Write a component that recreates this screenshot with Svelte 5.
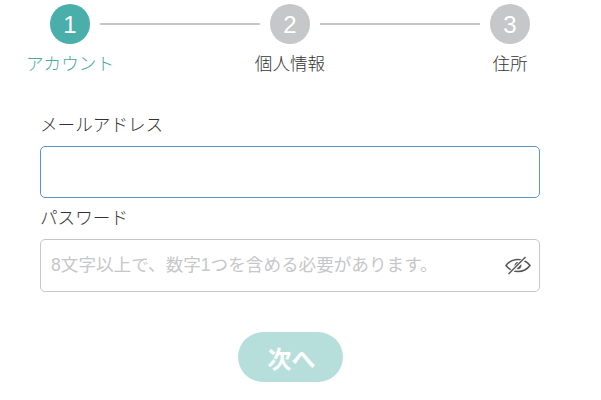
<script>
  const steps = [
    { n: 1, label: 'アカウント', active: true },
    { n: 2, label: '個人情報', active: false },
    { n: 3, label: '住所', active: false }
  ];
</script>

<main class="page">
  <ol class="stepper">
    {#each steps as s, i}
      {#if i > 0}<li class="line" aria-hidden="true"></li>{/if}
      <li class="step" class:active={s.active}>
        <span class="circle">{s.n}</span>
        <span class="label">{s.label}</span>
      </li>
    {/each}
  </ol>

  <form class="form" onsubmit={(e) => e.preventDefault()}>
    <label class="field">
      <span class="name">メールアドレス</span>
      <input class="input focus" type="email" />
    </label>
    <label class="field second">
      <span class="name">パスワード</span>
      <span class="wrap">
        <input class="input pw" type="password" placeholder="8文字以上で、数字1つを含める必要があります。" />
        <svg class="eye" viewBox="0 0 26 20" width="26" height="20" aria-hidden="true">
          <path d="M1 10.500C4 6.500 8.300 4.500 13 4.500s9 2 12 6C22 14.500 17.700 16.500 13 16.500S4 14.500 1 10.500Z" fill="none" stroke="#555" stroke-width="1.500"/>
          <path d="M13 7a3.500 3.500 0 0 1 3.300 4.600 3.500 3.500 0 0 1-4.300 2.400L9.600 11A3.500 3.500 0 0 1 13 7Z" fill="#555"/>
          <path d="M4 19 21 2" stroke="#fff" stroke-width="3.500"/>
          <path d="M3.500 19 20.500 2" stroke="#555" stroke-width="1.400"/>
        </svg>
      </span>
    </label>
    <div class="actions">
      <button class="next" type="button">次へ</button>
    </div>
  </form>
</main>

<style>
  :global(body) {
    margin: 0;
    background: #fff;
  }
  .page {
    width: 500px;
    padding: 4px 0 0 40px;
    font-family: "Liberation Sans", "Noto Sans CJK JP", sans-serif;
    color: #444;
  }
  .stepper {
    display: flex;
    list-style: none;
    margin: 0;
    padding: 0;
  }
  .step {
    width: 60px;
    flex: none;
    display: flex;
    flex-direction: column;
    align-items: center;
    white-space: nowrap;
  }
  .circle {
    width: 40px;
    height: 40px;
    border-radius: 50%;
    background: #c6c7c9;
    color: #fff;
    font-size: 24px;
    line-height: 42px;
    text-align: center;
  }
  .active .circle {
    background: #4aafaa;
  }
  .label {
    margin-top: 5px;
    font-size: 17.6px;
    line-height: 30px;
    font-weight: 300;
    color: #333;
  }
  .active .label {
    color: #45aaa5;
  }
  .line {
    flex: 1;
    height: 2px;
    margin-top: 19px;
    background: #c6c7c9;
  }
  .form {
    margin-top: 31px;
  }
  .field {
    display: block;
  }
  .name {
    display: block;
    font-size: 17.6px;
    line-height: 30px;
    font-weight: 300;
    margin-bottom: 6px;
    color: #333;
  }
  .second .name {
    margin-bottom: 6px;
    margin-top: 5px;
  }
  .wrap {
    display: block;
    position: relative;
  }
  .input {
    display: block;
    box-sizing: border-box;
    width: 100%;
    height: 52px;
    border: 1px solid #c6c7c9;
    border-radius: 5px;
    background: #fff;
    padding: 0 40px 0 10px;
    margin: 0;
    outline: none;
    font-family: inherit;
    font-size: 17.6px;
  }
  .focus {
    border-color: #5b93cc;
  }
  .pw {
    height: 53px;
  }
  .pw::placeholder {
    color: #c6c7c9;
    font-weight: 400;
    opacity: 1;
  }
  .eye {
    position: absolute;
    right: 9px;
    top: 16px;
  }
  .actions {
    display: flex;
    justify-content: center;
    margin-top: 40px;
    padding-left: 1px;
  }
  .next {
    width: 105px;
    height: 50px;
    border: 0;
    border-radius: 25px;
    background: #b6dfdc;
    color: #fff;
    font-family: inherit;
    font-size: 24px;
    font-weight: 700;
    padding: 0 0 0 2px;
  }
</style>
